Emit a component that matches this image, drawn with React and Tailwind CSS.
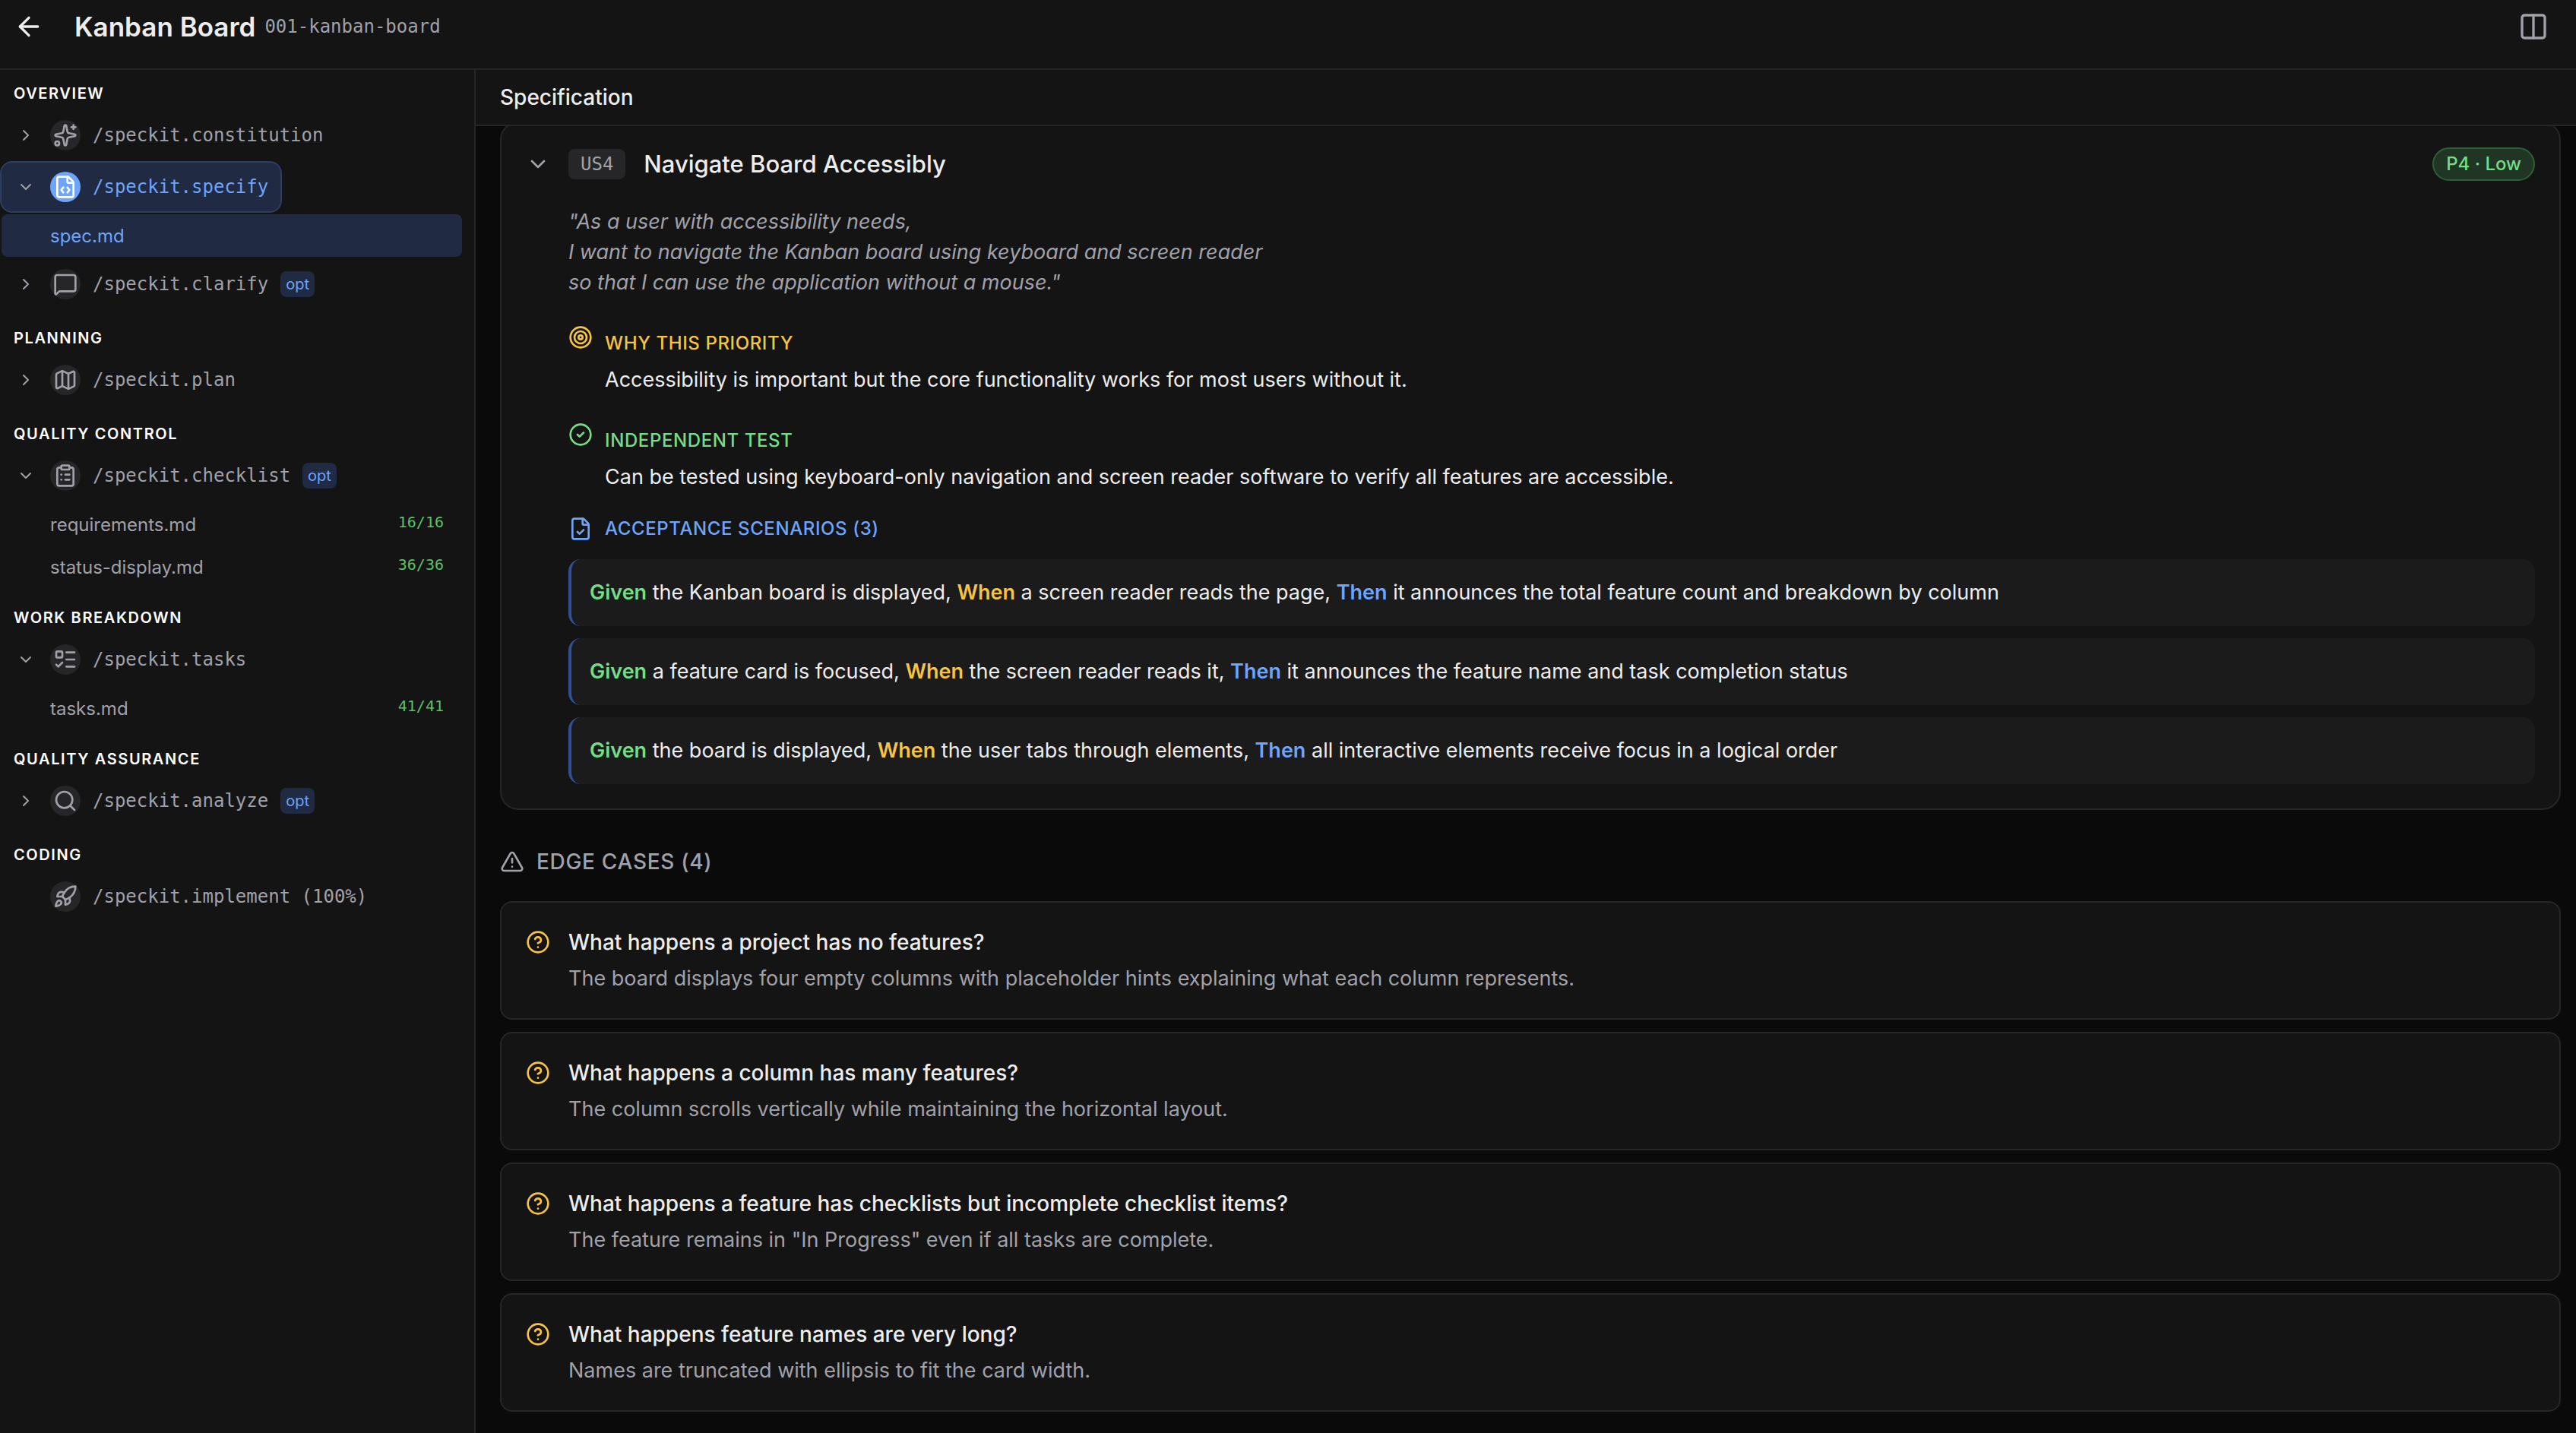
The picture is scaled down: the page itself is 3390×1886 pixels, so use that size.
import React, { useState, memo } from "react";
import {
  ArrowLeft,
  ChevronDown,
  ChevronRight,
  CircleCheck,
  CircleQuestionMark,
  ClipboardList,
  Columns2,
  FileCheck,
  FileCode,
  ListTodo,
  Map,
  MessageSquare,
  Rocket,
  Search,
  Sparkles,
  Target,
  TriangleAlert,
} from "lucide-react";

const SECTIONS = [
  {
    title: "Overview",
    steps: [
      { command: "/speckit.constitution", icon: Sparkles },
      {
        command: "/speckit.specify",
        icon: FileCode,
        active: true,
        open: true,
        files: [{ name: "spec.md", active: true }],
      },
      { command: "/speckit.clarify", icon: MessageSquare, optional: true },
    ],
  },
  { title: "Planning", steps: [{ command: "/speckit.plan", icon: Map }] },
  {
    title: "Quality Control",
    steps: [
      {
        command: "/speckit.checklist",
        icon: ClipboardList,
        optional: true,
        open: true,
        files: [
          { name: "requirements.md", count: "16/16" },
          { name: "status-display.md", count: "36/36" },
        ],
      },
    ],
  },
  {
    title: "Work Breakdown",
    steps: [
      {
        command: "/speckit.tasks",
        icon: ListTodo,
        open: true,
        files: [{ name: "tasks.md", count: "41/41" }],
      },
    ],
  },
  {
    title: "Quality Assurance",
    steps: [{ command: "/speckit.analyze", icon: Search, optional: true }],
  },
  {
    title: "Coding",
    steps: [
      { command: "/speckit.implement (100%)", icon: Rocket, leaf: true },
    ],
  },
];

const SCENARIOS = [
  {
    given: "the Kanban board is displayed",
    when: "a screen reader reads the page",
    then: "it announces the total feature count and breakdown by column",
  },
  {
    given: "a feature card is focused",
    when: "the screen reader reads it",
    then: "it announces the feature name and task completion status",
  },
  {
    given: "the board is displayed",
    when: "the user tabs through elements",
    then: "all interactive elements receive focus in a logical order",
  },
];

const EDGE_CASES = [
  {
    question: "What happens a project has no features?",
    answer:
      "The board displays four empty columns with placeholder hints explaining what each column represents.",
  },
  {
    question: "What happens a column has many features?",
    answer:
      "The column scrolls vertically while maintaining the horizontal layout.",
  },
  {
    question:
      "What happens a feature has checklists but incomplete checklist items?",
    answer:
      'The feature remains in "In Progress" even if all tasks are complete.',
  },
  {
    question: "What happens feature names are very long?",
    answer: "Names are truncated with ellipsis to fit the card width.",
  },
];

const Step = memo(({ step }) => {
  const [open, setOpen] = useState(Boolean(step.open));
  const Icon = step.icon;
  const Chevron = open ? ChevronDown : ChevronRight;

  return (
    <li>
      <button
        onClick={() => setOpen(!open)}
        className={`flex h-[68px] items-center gap-4 rounded-2xl border-2 pl-5 pr-4 font-['DejaVu_Sans_Mono',monospace] text-2xl ${
          step.active
            ? "border-[#2c3e61] bg-[#202a42] text-[#6ea4fa]"
            : "border-transparent text-[#a1a1aa]"
        }`}
      >
        <span className="mr-1 size-6 text-[#a1a1aa]">
          {!step.leaf && <Chevron size={24} />}
        </span>
        <span
          className={`flex size-10 items-center justify-center rounded-full ${
            step.active ? "bg-[#6ea4fa] text-white" : "bg-[#262628]"
          }`}
        >
          <Icon size={32} />
        </span>
        <span>{step.command}</span>
        {step.optional && (
          <span className="rounded-lg bg-[#202a42] px-[7px] font-['Inter',sans-serif] text-xl leading-[34px] text-[#6ea4fa]">
            opt
          </span>
        )}
      </button>
      {open && step.files && (
        <ul className="my-0.5 ml-0.5 mr-4">
          {step.files.map((file) => (
            <li key={file.name}>
              <a
                href={`#${file.name}`}
                className={`flex h-14 items-center justify-between rounded-lg pt-0.5 pl-16 pr-6 text-2xl ${
                  file.active
                    ? "bg-[#202a42] text-[#6ea4fa]"
                    : "text-[#a1a1aa]"
                }`}
              >
                {file.name}
                {file.count && (
                  <span className="pb-2 font-['DejaVu_Sans_Mono',monospace] text-xl text-[#58c265]">
                    {file.count}
                  </span>
                )}
              </a>
            </li>
          ))}
        </ul>
      )}
    </li>
  );
});

const Detail = memo(({ icon: Icon, label, color, children }) => (
  <div className="mt-8 flex gap-4">
    <Icon size={32} className={`mt-1 shrink-0 ${color}`} />
    <div>
      <h4
        className={`text-2xl leading-[56px] font-medium tracking-wide uppercase ${color}`}
      >
        {label}
      </h4>
      <p className="text-[27px] leading-10">{children}</p>
    </div>
  </div>
));

const Scenario = memo(({ scenario }) => (
  <li className="rounded-2xl border-l-4 border-[#31509a] bg-[#1b1b1b] p-6 text-[27px] leading-10">
    <strong className="font-semibold text-[#75dd88]">Given</strong>{" "}
    {scenario.given},{" "}
    <strong className="font-semibold text-[#f6c344]">When</strong>{" "}
    {scenario.when},{" "}
    <strong className="font-semibold text-[#6ea4fa]">Then</strong>{" "}
    {scenario.then}
  </li>
));

const UserStory = memo(() => (
  <article className="-mt-1.5 rounded-3xl border-2 border-[#262626] bg-[#141414] p-8">
    <header className="flex h-11 items-center gap-6">
      <button aria-label="Collapse story" className="text-[#a1a1aa]">
        <ChevronDown size={32} />
      </button>
      <span className="rounded-lg bg-[#262628] px-4 font-['DejaVu_Sans_Mono',monospace] text-2xl leading-10 text-[#a1a1aa]">
        US4
      </span>
      <h3 className="text-[31px] font-medium">Navigate Board Accessibly</h3>
      <span className="ml-auto rounded-full border-2 border-[#2c6137] bg-[#203524] px-4 text-2xl leading-10 font-medium text-[#75dd88]">
        P4 · Low
      </span>
    </header>
    <div className="pt-[34px] pl-14">
      <p className="text-[27px] leading-10 whitespace-pre-line text-[#a1a1aa] italic">
        {`"As a user with accessibility needs,
        I want to navigate the Kanban board using keyboard and screen reader
        so that I can use the application without a mouse."`}
      </p>
      <Detail icon={Target} label="Why this priority" color="text-[#f6c344]">
        Accessibility is important but the core functionality works for most
        users without it.
      </Detail>
      <Detail
        icon={CircleCheck}
        label="Independent test"
        color="text-[#75dd88]"
      >
        Can be tested using keyboard-only navigation and screen reader software
        to verify all features are accessible.
      </Detail>
      <h4 className="mt-8 mb-6 flex items-center gap-4 text-2xl leading-8 font-medium tracking-wide text-[#6ea4fa] uppercase">
        <FileCheck size={32} />
        Acceptance scenarios (3)
      </h4>
      <ul className="flex flex-col gap-4">
        {SCENARIOS.map((scenario) => (
          <Scenario key={scenario.given} scenario={scenario} />
        ))}
      </ul>
    </div>
  </article>
));

Step.displayName = "Step";
Detail.displayName = "Detail";
Scenario.displayName = "Scenario";
UserStory.displayName = "UserStory";

const App = () => (
  <div className="flex h-screen flex-col bg-[#0a0a0a] font-['Inter',sans-serif] text-[#ededed]">
    <header className="flex items-center border-b-2 border-[#262626] bg-[#141414] px-[18px] pb-5">
      <button aria-label="Back" className="mr-10">
        <ArrowLeft size={40} />
      </button>
      <h1 className="mr-3 text-[35px] leading-[70px] font-semibold">
        Kanban Board
      </h1>
      <span className="font-['DejaVu_Sans_Mono',monospace] text-2xl text-[#a1a1aa]">
        001-kanban-board
      </span>
      <button
        aria-label="Toggle split view"
        className="mr-[18px] ml-auto text-[#a1a1aa]"
      >
        <Columns2 size={40} />
      </button>
    </header>

    <div className="flex min-h-0 flex-1">
      <nav className="flex w-[626px] shrink-0 flex-col gap-1.5 overflow-hidden border-r-2 border-[#262626] bg-[#141414]">
        {SECTIONS.map((section) => (
          <section key={section.title}>
            <h2 className="px-[18px] pt-4 pb-1.5 text-xl leading-[30px] font-semibold tracking-[0.08em] text-white uppercase">
              {section.title}
            </h2>
            <ul>
              {section.steps.map((step) => (
                <Step key={step.command} step={step} />
              ))}
            </ul>
          </section>
        ))}
      </nav>

      <main className="flex min-w-0 flex-1 flex-col">
        <h2 className="border-b-2 border-[#262626] bg-[#141414] px-8 text-[28px] leading-[72px] font-medium">
          Specification
        </h2>
        <div className="min-h-0 flex-1 overflow-hidden pr-5 pl-8">
          <UserStory />
          <h3 className="mt-12 mb-8 flex items-center gap-4 text-[28px] leading-10 font-medium tracking-wide text-[#a1a1aa] uppercase">
            <TriangleAlert size={32} />
            Edge cases (4)
          </h3>
          <ul className="flex flex-col gap-4">
            {EDGE_CASES.map((item) => (
              <li
                key={item.question}
                className="flex gap-6 rounded-2xl border-2 border-[#262626] bg-[#141414] p-8 leading-10"
              >
                <CircleQuestionMark
                  size={32}
                  className="mt-1 shrink-0 text-[#f6c344]"
                />
                <div>
                  <p className="mb-2 text-[28px] leading-10 font-medium">
                    {item.question}
                  </p>
                  <p className="text-[27px] leading-10 text-[#a1a1aa]">
                    {item.answer}
                  </p>
                </div>
              </li>
            ))}
          </ul>
        </div>
      </main>
    </div>
  </div>
);

export default App;
